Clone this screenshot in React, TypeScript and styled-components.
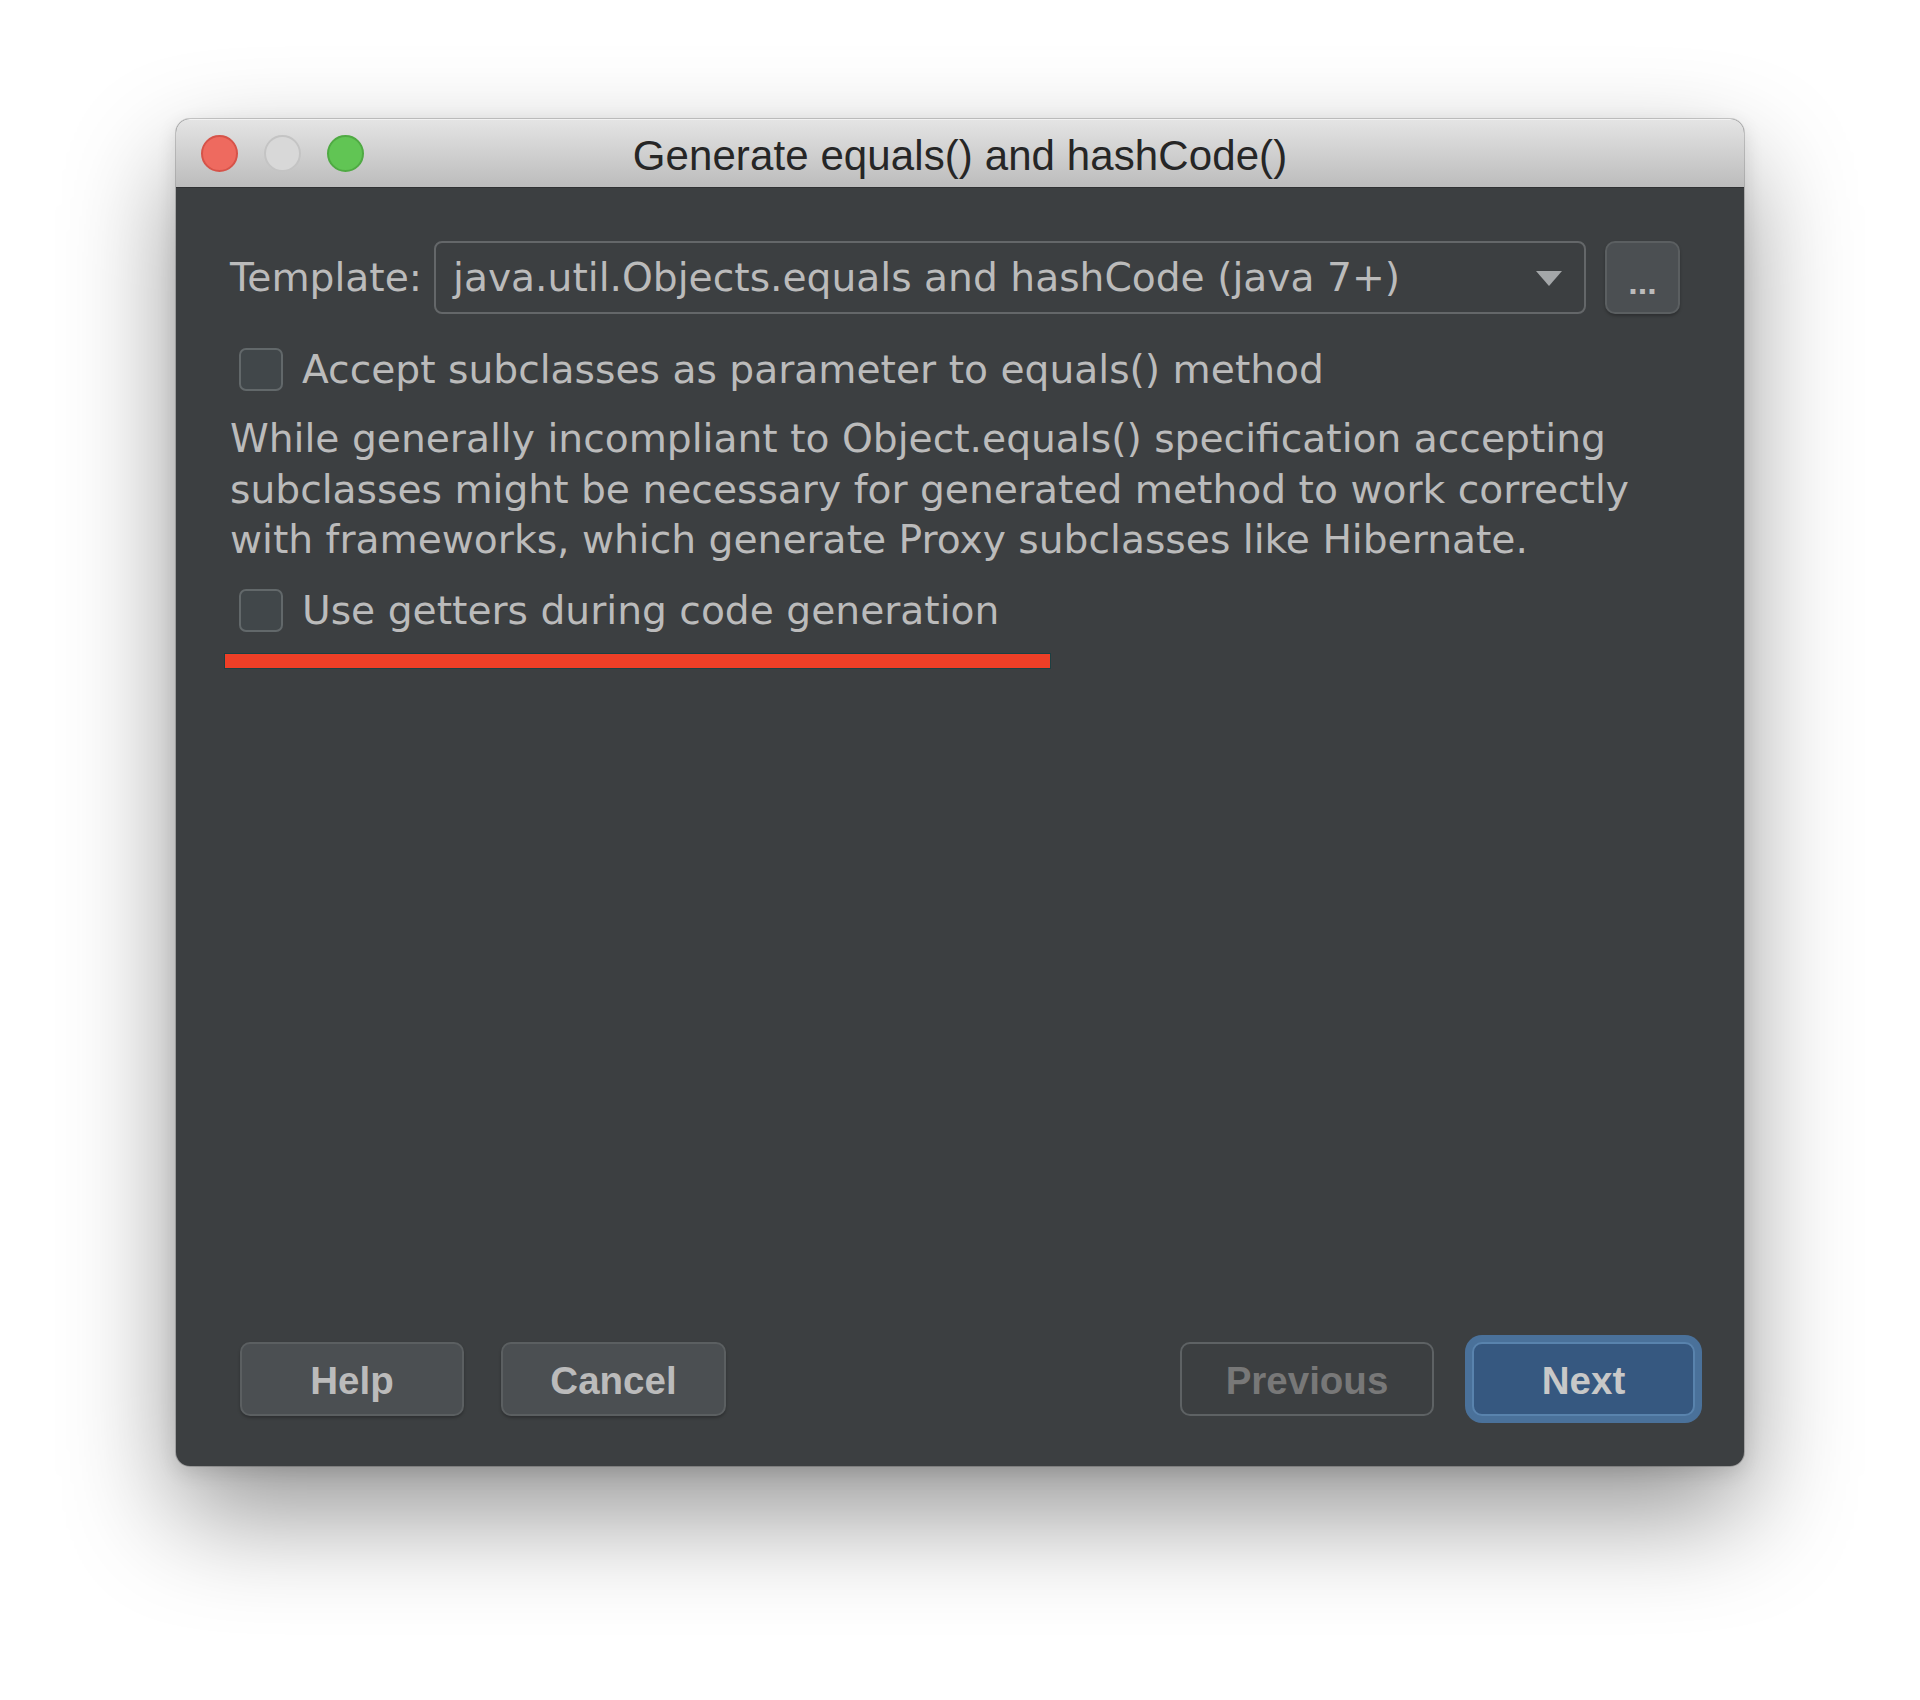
import React from "react";
import styled, { createGlobalStyle } from "styled-components";

const Global = createGlobalStyle`
  html, body { margin: 0; padding: 0; background: #ffffff; }
  body { width: 1920px; height: 1700px; overflow: hidden; }
`;

const Page = styled.div`
  width: 1920px;
  height: 1700px;
  padding: 119px 0 0 176px;
  box-sizing: border-box;
`;

const Window = styled.div`
  width: 1568px;
  height: 1347px;
  border-radius: 14px;
  overflow: hidden;
  display: flex;
  flex-direction: column;
  background: #3c3f41;
  box-shadow: 0 48px 110px rgba(0, 0, 0, 0.42), 0 0 0 1px rgba(0, 0, 0, 0.18), 0 6px 20px rgba(0,0,0,0.12);
`;

const TitleBar = styled.div`
  position: relative;
  height: 67px;
  flex: none;
  display: flex;
  align-items: center;
  justify-content: center;
  background: linear-gradient(#e4e4e4 0%, #d2d2d2 45%, #bcbcbc 100%);
  border-top: 1px solid #f2f2f2;
  border-bottom: 1px solid #2f3133;
`;

const Lights = styled.div`
  position: absolute;
  left: 25px;
  top: 0;
  bottom: 0;
  display: flex;
  align-items: center;
  gap: 26px;
`;

const Light = styled.span<{ $fill: string; $edge: string }>`
  width: 37px;
  height: 37px;
  border-radius: 50%;
  box-sizing: border-box;
  background: ${(p) => p.$fill};
  border: 2px solid ${(p) => p.$edge};
`;

const Title = styled.div`
  font-family: "Liberation Sans", Arial, sans-serif;
  font-size: 42px;
  color: #262626;
  letter-spacing: 0.1px;
  padding-top: 4px;
`;

const Body = styled.div`
  flex: 1;
  display: flex;
  flex-direction: column;
`;

const Content = styled.div`
  flex: 1;
  padding: 53px 64px 0 54px;
  display: flex;
  flex-direction: column;
  font-family: "DejaVu Sans", "Lucida Grande", sans-serif;
  font-size: 39.2px;
  color: #bbbbbb;
`;

const TemplateRow = styled.div`
  display: flex;
  align-items: center;
  height: 73px;
`;

const Label = styled.span`
  margin-right: 12px;
  white-space: nowrap;
`;

const Combo = styled.div`
  flex: 1;
  height: 73px;
  box-sizing: border-box;
  border: 2px solid #646769;
  border-radius: 8px;
  display: flex;
  align-items: center;
  padding: 0 22px 0 17px;
  white-space: nowrap;
`;

const ComboText = styled.span`
  flex: 1;
`;

const Arrow = styled.span`
  width: 0;
  height: 0;
  border-left: 13.5px solid transparent;
  border-right: 13.5px solid transparent;
  border-top: 15px solid #a4a7a9;
  margin-top: 2px;
`;

const DotsButton = styled.div`
  margin-left: 19px;
  width: 75px;
  height: 73px;
  box-sizing: border-box;
  border: 2px solid #5b5f61;
  border-radius: 10px;
  background: #4b4f52;
  box-shadow: 0 2px 3px rgba(0, 0, 0, 0.25);
  display: flex;
  align-items: center;
  justify-content: center;
  font-family: "Liberation Sans", Arial, sans-serif;
  font-weight: bold;
  font-size: 34px;
  color: #bbbbbb;
  padding-top: 10px;
`;

const CheckRow = styled.label<{ $top: number }>`
  display: flex;
  align-items: center;
  margin-top: ${(p) => p.$top}px;
  height: 43px;
  padding-left: 9px;
  white-space: nowrap;
`;

const Box = styled.span`
  width: 44px;
  height: 43px;
  box-sizing: border-box;
  border: 2px solid #62686a;
  border-radius: 7px;
  background: #41474a;
  margin-right: 19px;
  flex: none;
`;

const Paragraph = styled.p`
  margin: 23px 0 0 0;
  line-height: 50.5px;
  white-space: nowrap;
`;

const RedBar = styled.div`
  margin: 21px 0 0 -6px;
  width: 827px;
  height: 16px;
  box-sizing: border-box;
  background: #ee3f27;
  border: 1px solid #1d3f42;
`;

const ButtonRow = styled.div`
  display: flex;
  align-items: center;
  padding: 0 49px 50px 64px;
`;

const Button = styled.div<{ $w: number; $kind?: "normal" | "disabled" | "default" }>`
  width: ${(p) => p.$w}px;
  height: 74px;
  box-sizing: border-box;
  border-radius: 10px;
  display: flex;
  align-items: center;
  justify-content: center;
  font-family: "Liberation Sans", Arial, sans-serif;
  font-weight: bold;
  font-size: 38.5px;
  padding-top: 3px;
  ${(p) =>
    p.$kind === "disabled"
      ? `border: 2px solid #5e6264; background: transparent; color: #787878;`
      : p.$kind === "default"
      ? `border: 2px solid #5983ad; background: #365880; color: #c8c8c8; box-shadow: 0 0 0 7px #4a719a;`
      : `border: 2px solid #5b5f61; background: #4b4f52; color: #bbbbbb; box-shadow: 0 2px 3px rgba(0,0,0,0.25);`}
`;

const Spacer = styled.div`
  flex: 1;
`;

const Gap = styled.div<{ $w: number }>`
  width: ${(p) => p.$w}px;
  flex: none;
`;

export default function App() {
  return (
    <>
      <Global />
      <Page>
        <Window>
          <TitleBar>
            <Lights>
              <Light $fill="#ee6a5f" $edge="#d65349" />
              <Light $fill="#d8d8d8" $edge="#c4c4c4" />
              <Light $fill="#61c554" $edge="#4faa43" />
            </Lights>
            <Title>Generate equals() and hashCode()</Title>
          </TitleBar>
          <Body>
            <Content>
              <TemplateRow>
                <Label>Template:</Label>
                <Combo>
                  <ComboText>java.util.Objects.equals and hashCode (java 7+)</ComboText>
                  <Arrow />
                </Combo>
                <DotsButton>...</DotsButton>
              </TemplateRow>
              <CheckRow $top={34}>
                <Box />
                Accept subclasses as parameter to equals() method
              </CheckRow>
              <Paragraph>
                While generally incompliant to Object.equals() specification accepting
                <br />
                subclasses might be necessary for generated method to work correctly
                <br />
                with frameworks, which generate Proxy subclasses like Hibernate.
              </Paragraph>
              <CheckRow $top={23}>
                <Box />
                Use getters during code generation
              </CheckRow>
              <RedBar />
            </Content>
            <ButtonRow>
              <Button $w={224}>Help</Button>
              <Gap $w={37} />
              <Button $w={225}>Cancel</Button>
              <Spacer />
              <Button $w={254} $kind="disabled">Previous</Button>
              <Gap $w={38} />
              <Button $w={223} $kind="default">Next</Button>
            </ButtonRow>
          </Body>
        </Window>
      </Page>
    </>
  );
}
